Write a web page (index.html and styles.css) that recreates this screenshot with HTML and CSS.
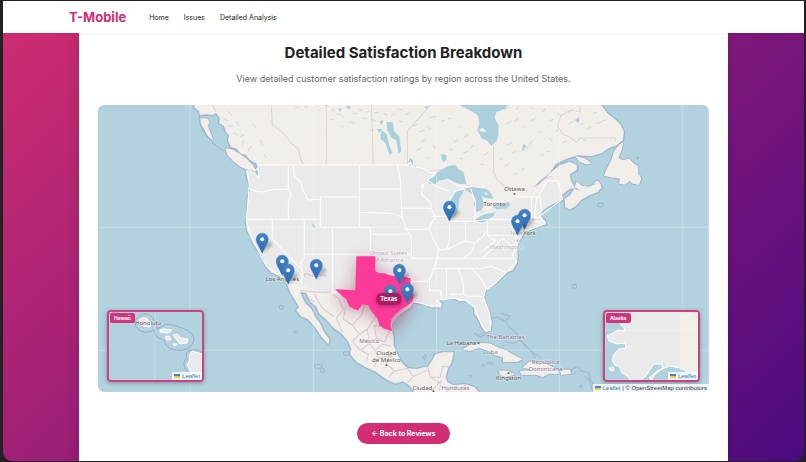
FILE: index.html
```html
<!DOCTYPE html>
<html lang="en">
  <head>
    <meta charset="UTF-8">
    <meta name="viewport" content="width=device-width, initial-scale=1.0">
    <title>T-Mobile - Detailed Analysis</title>
    <link rel="stylesheet" href="styles.css">
  </head>
  <body>
    <div class="page">
      <header class="navbar">
        <a class="logo" href="#">T-Mobile</a>
        <nav class="nav-links">
          <a href="#">Home</a>
          <a href="#">Issues</a>
          <a href="#">Detailed Analysis</a>
        </nav>
      </header>
      <main class="container">
        <h1>Detailed Satisfaction Breakdown</h1>
        <p class="subtitle">View detailed customer satisfaction ratings by region across the United States.</p>

        <div class="map">
          <svg class="map-canvas" viewBox="98 105 610 287" preserveAspectRatio="xMidYMid slice" role="img" aria-label="Map of the United States">
            <defs>
              <linearGradient id="pin-fill" x1="0" y1="0" x2="0" y2="1">
                <stop offset="0" stop-color="#4286c8"/>
                <stop offset="1" stop-color="#2f69ae"/>
              </linearGradient>
              <filter id="soft" x="-50%" y="-50%" width="200%" height="200%"><feGaussianBlur stdDeviation="1.5"/></filter>
              <filter id="glow" x="-50%" y="-50%" width="200%" height="200%"><feGaussianBlur stdDeviation="8"/></filter>
              <path id="continent" d="M192 100L195 108L199 111L200 115L207 114L212 115L216 113L220 118L219 123L224 126L226 132L229 135L228 141L231 147L236 148L240 153L246 155L250 160L256 163L258 168L258 178L255 172L250 171L246 170L247 177L249 184L250 190L248 198L247 208L248 214L246 221L247 230L251 236L253 243L258 250L263 257L266 266L271 272L279 275L284 279L287 283L290 292L295 300L299 307L296 310L301 316L308 319L315 327L321 336L328 344L329 339L323 331L320 324L315 317L311 309L305 303L301 295L300 291L306 293L310 301L316 306L319 313L327 320L333 327L341 333L348 341L351 348L350 354L357 362L366 367L375 371L386 379L395 383L403 381L410 386L416 394L480 394L474 387L465 384L453 385L447 382L445 377L447 369L451 362L453 352L444 352L435 354L432 360L428 366L416 369L407 368L401 362L397 354L393 345L393 337L392 331L391 324L395 318L401 313L410 307L413 302L421 303L427 304L431 307L437 306L440 308L441 303L437 300L445 298L454 298L459 301L465 300L470 302L474 307L474 313L479 320L481 326L485 331L490 330L491 322L489 313L485 304L483 297L485 290L490 285L496 282L501 277L506 272L512 270L516 263L517 255L514 249L517 246L516 239L520 239L523 232L530 229L545 224L544 220L541 221L539 216L542 210L548 206L556 202L562 199L560 196L567 190L572 188L577 190L586 188L595 184L601 187L597 192L589 195L580 200L575 206L569 209L565 207L564 199L570 195L574 188L570 180L569 174L576 170L576 165L569 162L560 165L552 171L545 178L539 184L532 188L540 180L549 173L555 164L565 159L577 155L590 156L601 153L608 148L616 145L622 140L623 132L620 125L614 119L607 114L602 107L597 100Z"/>
              <path id="islands" d="M200 119L207 119L209 122L207 126L210 133L212 139L208 136L204 128L201 124ZM226 149L232 150L239 154L246 159L252 165L255 170L249 170L240 166L234 161L228 155ZM619 145L622 143L620 151L617 158L623 161L628 159L632 163L637 167L637 174L640 178L638 184L632 183L629 180L624 184L619 183L620 178L611 177L604 175L607 168L611 161L614 151ZM576 157L584 159L590 163L586 164L579 161ZM576 182L581 186L586 187L580 189L575 187ZM594 183L597 181L600 185L597 189ZM463 349L470 345L480 343L490 344L498 348L506 351L513 355L521 359L517 361L503 361L503 357L494 354L488 350L478 347L470 350ZM499 371L507 371L513 374L505 376L500 374ZM523 367L529 362L538 362L547 365L556 369L558 373L548 373L542 376L536 374L521 374L520 371L530 371L529 368ZM560 370L569 370L570 373L561 374ZM525 229L535 224L532 228Z"/>
              <g id="pin">
                <path d="M0 20L4 17L10 12Q9 7 5 9Z" fill="#222" opacity=".3" filter="url(#soft)"/>
                <path d="M-6 6A6 6 0 0 1 6 6C6 10 3 13 0 20C-3 13-6 10-6 6Z" fill="url(#pin-fill)" stroke="#3675b3" stroke-width=".5"/>
                <circle cy="6" r="2" fill="#fff"/>
              </g>
            </defs>

            <rect class="water" x="98" y="105" width="610" height="287"/>
            <g class="sea-border">
              <use href="#continent"/>
              <use href="#islands"/>
            </g>
            <g class="shallow">
              <use href="#continent"/>
              <use href="#islands"/>
            </g>
            <use class="land" href="#continent"/>
            <use class="land coast" href="#islands"/>

            <!-- United States -->
            <path class="usa" d="M257 165H407L410 163L412 167L420 168L428 172L435 173L426 182L434 184L447 179L451 184L464 186L470 187L473 201L474 211L473 221L480 220L492 214L494 208L506 207L514 197H531L540 192L547 181L552 178L557 182L560 193L562 199L548 206L541 211L540 217L545 222L530 229L523 232L520 239L516 239L517 255L516 263L512 270L506 272L496 282L485 290L483 297L489 313L491 322L490 330L485 331L479 320L474 313L474 307L465 300L454 298L437 300L441 307L431 307L421 303L413 302L401 313L391 324L392 331L383 328L376 315L370 306L363 304L358 310L349 307L335 289L331 292H318L301 284L287 283L279 275L271 272L263 257L253 243L247 230L246 221L248 198L250 190L246 170L258 176Z"/>

            <!-- lakes and bays -->
            <g class="lake">
              <path d="M456 104H508L504 109L496 112L494 118L498 125L498 135L496 141L491 146L487 141L481 138L477 130L479 123L477 115L469 110Z"/>
              <path d="M426 181L433 177L437 172L443 169L447 166L454 165L458 169L463 172L466 184L459 184L453 182L447 179L443 180L438 181L435 184L430 184Z"/>
              <path d="M449 220L450 209L450 199L453 193L459 190L464 189L462 194L459 198L458 207L455 216Z"/>
              <path d="M464 189L470 187L479 188L486 189L491 194L493 199L485 198L481 196L484 204L481 210L476 212L473 204L475 199L471 194Z"/>
              <path d="M473 221L478 217L484 214L495 212L493 216L486 220L480 223Z"/>
              <path d="M492 207L497 204L508 202L510 205L506 208L497 209Z"/>
              <path d="M386 122L392 122L394 131L399 137L401 151L398 154L396 140L391 138L387 130ZM381 130L386 134L389 145L392 153L389 155L385 143L380 139ZM376 129L382 129L379 133ZM379 121L383 120L381 125Z"/>
              <path d="M441 154L446 155L446 160L443 162L441 159ZM409 158L413 160L412 166L408 164ZM311 222L315 226L313 228ZM319 266L322 266L321 269ZM338 108L342 109L339 112ZM345 106L350 106L349 110ZM423 107L428 106L427 109ZM523 144L526 146L521 152ZM574 120L579 117L578 123Z"/>
            </g>
            <path class="speck" d="M304 107h4M318 110l3 1M324 105l4 2M331 111l3-2M336 114l4 1M341 116l3 2M353 113l4 1M357 109l5 2M362 118l4 1M366 112l4-1M371 119l4 2M374 113l4-1M350 122l4 1M341 126l2 1M330 120l3-1M383 113l4 2M391 116l3-3M398 109l4 1M399 121l3 1M405 115l4-2M379 125l3-3M370 130l3 1M413 126l4-2M419 132l5-2M426 126l4 3M430 118l5-2M440 122l4-2M447 118l3 1M458 128l3-2M464 137l4-3M454 142l3-2M421 142l4-2M416 151l4-3M432 145l3 3M449 149l3 1M463 153l5-2M470 148l3-3M459 158l3 1M426 157l3 2M484 155l4-3M480 164l3 1M506 124l5-3M514 121l4-3M522 126l3 2M530 121l5-3M507 145l5-3M512 153l3-2M524 151l4-5M529 145l3-5M540 156l3-2M548 138l4 3M546 151l4 1M555 132l3-3M562 143l4-2M538 131l3 2M549 121l4-2M557 113l4 3M541 112l4-3M568 112l4-2M568 124l5-3M579 125l4-2M587 129l3-2M596 124l5-2M601 121l5-1M592 114l4-2M582 139l4 2M505 166l4-3M513 175l4-2M521 170l3-2M499 158l3 2M504 110l5-4M515 109l4-2M529 107l4 2M228 111l4 5M223 118l5 3M236 121l3 5M233 133l5 2M240 137l4-3M242 145l2-5M248 151l3-5M228 126l5 0M253 124l3 4M260 140l2 5M264 154l2 4M294 108l5-1"/>
            <path class="land" d="M479 129l3-1 4 3-2 1-5-1ZM484 192l4 2-3 1Z"/>

            <!-- province and country borders -->
            <path class="province" d="M271 104L272 124L278 129L284 134L291 143L298 149L301 160L303 164M326 104V164M371 104L373 164M431 104L407 131V164M493 146V171L497 180L504 186L514 189M560 116L557 126L562 134L569 137L576 142L580 138H615V141M560 116L570 110L580 112L578 104M541 180L552 176M212 104L216 112M413 166L426 172L444 169L463 183L471 188L478 207L482 213M455 165L465 183"/>
            <path class="mex-border" d="M300 290L318 292H331M313 292L322 308L333 316M333 294L339 299L343 309L336 318L342 332M345 307L343 319L352 325L361 315L364 305M352 325L359 334L367 329L376 315M359 334L352 341L360 350L369 343L367 329M369 343L376 338L384 342L389 331M376 338L374 325L381 326M360 350L368 354L366 362M369 343L375 350L382 344L391 346M375 350L378 358L390 355L396 361M378 358L374 366M390 355L386 363L394 371L388 377M394 371L407 368M407 368L413 376L407 383M413 376L427 370M427 366L430 377L439 382L431 391M430 377H440L442 366L450 367M441 380L439 390M456 385L445 392M465 384L460 392M305 292L309 299L315 302M312 308L316 311"/>

            <!-- state borders -->
            <path class="state" d="M257 165H407L410 162L412 167L420 168L428 172L435 173M248 188L255 191L262 192L271 190L289 189M288 165V189L291 194L288 203V219M247 219H320M293 165L294 177L300 181L303 191L308 200L320 199M320 227V197H359M359 165V227M320 227H370M304 219V258L300 263L302 272L301 284M272 219V239L300 268M332 227V292M304 254H410M359 189H400M359 212L388 213L397 215L403 218M370 227V254M370 234H407M397 165L400 179L401 208L402 218L407 231L411 237V257M400 208H431M404 229H427M420 187L423 184L428 181M423 185L421 194L430 202L431 209L435 217L428 228L433 239L438 249L437 257L433 269L429 280V290H440L441 298M431 216H449M449 221H474M449 221V241L446 249M465 221V241M438 250L446 249L454 246L460 243L465 241L474 243L482 237L487 229M487 219V235H514M488 219H512L516 225L513 231L516 236M437 258H514M410 258H436M375 256V271L411 278V300M434 268H482L491 266L505 272M446 268V298M458 268L463 285V294M449 294H464L466 296H482M471 268L480 278L486 288M411 281H430M474 244L471 252L463 258M482 257L493 248L502 238M478 253L489 246L495 240L487 236M502 238L511 246L516 249M531 197V221L543 222M536 197L534 217M547 181L539 194L541 211M530 217H541M514 197H540M474 221L487 219M427 172L435 173L427 180L434 185L440 188L449 191M447 179L458 186L470 187M331 292H335"/>
            <path class="state-coast" d="M247 171L249 184L248 198L246 221L251 236L258 250L266 266L279 275L287 283M254 171L258 168V178M516 236L513 247M519 239L512 255L516 262L506 272L496 282L485 290L483 297L489 313L490 330L485 331L479 320L474 307L465 300L454 298L437 300L441 305L431 306L413 301M449 220L450 199L455 191L464 189M470 188L475 202L474 221L481 223M523 232L545 223L539 216L562 199L557 181L547 181"/>

            <path class="sea-line" d="M199 116L202 130L214 144L225 152M478 335L483 332M502 318L508 326L517 334L524 345L534 353L540 357M490 318L497 317L504 321L510 316L500 313M488 332L480 337L474 333M504 341L512 343L520 340L530 350L535 358M570 370L577 366L581 371L588 372L590 379L594 388M573 374L575 371M584 376L589 380L592 391M423 357l2-3 1 3-2 2Z"/>
            <g class="islet">
              <circle cx="574" cy="286" r="2"/><ellipse cx="600" cy="205" rx="3" ry="2"/><circle cx="281" cy="307" r="2"/><circle cx="295" cy="332" r="1"/><ellipse cx="346" cy="353" rx="3" ry="2"/><ellipse cx="318" cy="366" rx="4" ry="2"/><circle cx="322" cy="370" r="2"/><ellipse cx="483" cy="365" rx="2" ry="1"/><ellipse cx="490" cy="363" rx="3" ry="1"/><circle cx="470" cy="376" r="1"/><circle cx="637" cy="158" r="1"/><circle cx="580" cy="386" r="1"/>
            </g>
            <path class="tile-seam" d="M190 105V392M313 105V392M436 105V392M559 105V392M682 105V392M98 227H708M98 350H708"/>

            <g class="place">
              <text x="514" y="191">Ottawa</text>
              <text x="494" y="206">Toronto</text>
              <text x="529" y="235">York</text>
              <text x="282" y="281">Los Angeles</text>
              <text x="386" y="355">Ciudad</text>
              <text x="386" y="362">de México</text>
              <text x="461" y="345">La Habana</text>
              <text x="508" y="380">Kingston</text>
              <text x="422" y="390">Ciudad</text>
            </g>
            <g class="country">
              <text x="369" y="343">México</text>
              <text x="505" y="339">The Bahamas</text>
              <text x="490" y="354">Cuba</text>
              <text x="545" y="364">República</text>
              <text x="545" y="371">Dominicana</text>
              <text x="455" y="390">Honduras</text>
            </g>
            <g class="faded">
              <text x="388" y="255">United States</text>
              <text x="388" y="262">of America</text>
              <text x="506" y="249">Washington</text>
              <text x="315" y="277">Phoenix</text>
              <text x="516" y="235">New</text>
            </g>
            <g class="dot"><circle cx="514" cy="194" r="1"/><circle cx="386" cy="365" r="1"/><circle cx="478" cy="343" r="1"/><circle cx="508" cy="373" r="1"/><circle cx="433" cy="391" r="1"/></g>

            <!-- highlighted state -->
            <path class="texas-glow" filter="url(#glow)" d="M356 260H375V275L411 282L413 301L391 335L376 319L363 308L349 311L335 293H355Z"/>
            <path class="texas" d="M356 256H375V271L379 273L385 273L389 275L395 276L401 275L406 277L410 278V289L413 294L412 301L410 303L406 306L401 309L395 314L391 319L390 325L392 331L383 328L379 325L377 318L371 311L368 305L362 304L358 310L354 309L349 306L346 299L341 295L335 289L355 290Z"/>

            <use href="#pin" x="262" y="233"/>
            <use href="#pin" x="282" y="255"/>
            <use href="#pin" x="288" y="264"/>
            <use href="#pin" x="316" y="259"/>
            <use href="#pin" x="399" y="264"/>
            <use href="#pin" x="390" y="285"/>
            <use href="#pin" x="407" y="283"/>
            <use href="#pin" x="449" y="201"/>
            <use href="#pin" x="524" y="209"/>
            <use href="#pin" x="517" y="215"/>
          </svg>
          <span class="state-label">Texas</span>

          <div class="inset inset-hawaii">
            <svg class="map-canvas" viewBox="109 313 93 68" preserveAspectRatio="xMidYMid slice" role="img" aria-label="Map of Hawaii">
              <rect class="water" x="109" y="313" width="93" height="68"/>
              <path class="hawaii-sea" d="M109 315L116 313L120 315M136 320Q144 311 152 318Q158 326 157 330L166 325Q177 326 187 331Q196 336 193 344Q188 353 175 351Q165 349 164 341Q155 339 154 331Q145 336 138 330Q133 325 136 320Z"/>
              <path class="hawaii-sea" d="M202 354Q197 348 187 353Q187 359 184 363Q183 368 189 375L188 383"/>
              <path class="hawaii-land" d="M137 323L142 319L146 319L151 324L150 328L144 327L138 325ZM160 331L164 330L172 331L168 334L160 333ZM165 338L169 337L171 341L167 341ZM173 336L177 335L181 339L188 340L187 344L180 345L177 341ZM173 345L177 345L175 347ZM202 355L192 352L189 357L190 361L187 366L191 373L190 382H203Z"/>
              <path class="tile-seam" d="M155 313V381"/>
              <text class="place" x="148" y="326">Honolulu</text>
            </svg>
            <span class="inset-label">Hawaii</span>
            <span class="attribution"><svg class="flag" viewBox="0 0 12 8"><path fill="#4c7be1" d="M0 0h12v4H0z"/><path fill="#ffd500" d="M0 4h12v3H0z"/><path fill="#e0bc00" d="M0 7h12v1H0z"/></svg> <a href="#">Leaflet</a></span>
          </div>

          <div class="inset inset-alaska">
            <svg class="map-canvas" viewBox="605 313 93 68" preserveAspectRatio="xMidYMid slice" role="img" aria-label="Map of Alaska">
              <rect class="water" x="605" y="313" width="93" height="68"/>
              <path class="hawaii-land" d="M617 311L620 318L619 323L624 329L625 332L618 331L613 334L607 337L609 342L617 345L625 344L626 349L619 350L614 355L612 361L615 366L619 367L622 374L627 377L632 383H638L646 377L649 372L654 365L662 365L663 369L657 372L654 376L662 370L670 367L680 369L688 373L694 374L700 380V311ZM609 369L613 368L614 371L611 372ZM649 379L655 374L652 381Z"/>
              <path class="land" d="M681 311H700V378L693 374L688 373L681 369Z"/>
              <path class="tile-seam" d="M681 313V381M605 331H698"/>
              <path class="speck" d="M691 313h5M664 367v-3"/>
            </svg>
            <span class="inset-label">Alaska</span>
            <span class="attribution"><svg class="flag" viewBox="0 0 12 8"><path fill="#4c7be1" d="M0 0h12v4H0z"/><path fill="#ffd500" d="M0 4h12v3H0z"/><path fill="#e0bc00" d="M0 7h12v1H0z"/></svg> <a href="#">Leaflet</a></span>
          </div>

          <span class="attribution"><svg class="flag" viewBox="0 0 12 8"><path fill="#4c7be1" d="M0 0h12v4H0z"/><path fill="#ffd500" d="M0 4h12v3H0z"/><path fill="#e0bc00" d="M0 7h12v1H0z"/></svg> <a href="#">Leaflet</a> | © OpenStreetMap contributors</span>
        </div>

        <a class="back-button" href="#">← Back to Reviews</a>
      </main>
    </div>
  </body>
</html>
```
FILE: styles.css
```css
* {
    box-sizing: border-box;
}
body {
    margin: 0;
    padding: 1px 2px 1px 3px;
    background-color: #232124;
    font-family: Inter, Arial, sans-serif;
    color: #222;
}
a {
    color: inherit;
    text-decoration: none;
}
.page {
    display: flex;
    flex-direction: column;
    min-height: calc(100vh - 2px);
    border-radius: 0 0 9px 9px;
    overflow: hidden;
    background: linear-gradient(135deg, #d12d70 0%, #4b0a80 100%);
}
.navbar {
    display: flex;
    align-items: center;
    gap: 23px;
    height: 32px;
    padding: 0 66px;
    background-color: #fff;
    box-shadow: 0 1px 2px rgba(0, 0, 0, 0.05);
    position: relative;
}
.logo {
    font-size: 13px;
    font-weight: 700;
    color: #d32d73;
}
.nav-links {
    display: flex;
    gap: 15px;
    font-size: 7px;
    font-weight: 400;
}
.container {
    flex: 1;
    display: flex;
    flex-direction: column;
    align-items: center;
    width: 81%;
    margin: 0 auto;
    padding: 10px 19px 15px;
    background-color: #fff;
    box-shadow: 0 0 10px rgba(0, 0, 0, 0.12);
}
h1 {
    margin: 0;
    font-size: 15px;
    line-height: 20px;
    font-weight: 700;
}
.subtitle {
    margin: 10px 0 21px;
    font-size: 9px;
    line-height: 11px;
    color: #666;
}
.map {
    position: relative;
    width: 100%;
    aspect-ratio: 610 / 287;
    border-radius: 6px;
    overflow: hidden;
}
.map-canvas {
    display: block;
    width: 100%;
    height: 100%;
}
.water {
    fill: #b1d2de;
}
.sea-border {
    fill: none;
    stroke: #a3b2cb;
    stroke-width: 3;
    stroke-linejoin: round;
}
.shallow {
    fill: none;
    stroke: #b1d2de;
    stroke-width: 1;
}
.land {
    fill: #f2efea;
}
.coast {
    stroke: #f2efea;
    stroke-width: 1;
}
.usa {
    fill: #ebeaea;
}
.lake {
    fill: #abd0dd;
}
.speck {
    fill: none;
    stroke: #abd0dd;
    stroke-width: 1;
    opacity: 0.6;
}
.province {
    fill: none;
    stroke: #cfc3c9;
    stroke-width: 1;
    opacity: 0.6;
}
.mex-border {
    fill: none;
    stroke: #cdb9ca;
    stroke-width: 1;
    opacity: 0.7;
}
.state, .state-coast {
    fill: none;
    stroke: #fff;
    stroke-width: 1;
    stroke-linejoin: round;
}
.sea-line, .islet {
    fill: none;
    stroke: #9ba9c4;
    stroke-width: 1;
    opacity: 0.7;
}
.tile-seam {
    fill: none;
    stroke: #fff;
    stroke-width: 1;
    opacity: 0.3;
}
.place, .country, .faded {
    font-family: "Noto Sans", sans-serif;
    font-size: 6px;
    text-anchor: middle;
    fill: #505050;
    stroke: rgba(255, 255, 255, 0.5);
    stroke-width: 1;
    paint-order: stroke;
}
.country {
    fill: #8d7097;
}
.faded {
    fill: #b9b3b9;
}
.dot {
    fill: #666;
}
.texas-glow {
    fill: #8a1a4e;
    opacity: 0.45;
}
.texas {
    fill: #fc3a98;
}
.state-label {
    position: absolute;
    left: 47.6%;
    top: 67.6%;
    transform: translate(-50%, -50%);
    padding: 2px 4px;
    border-radius: 5px;
    background-color: rgba(168, 24, 92, 0.9);
    box-shadow: 0 1px 4px rgba(60, 0, 30, 0.4);
    color: #fff;
    font-size: 6px;
    line-height: 8px;
    font-weight: 700;
}
.inset {
    position: absolute;
    bottom: 10px;
    width: 97px;
    height: 72px;
    border: 2px solid #cf3f83;
    border-radius: 4px;
    overflow: hidden;
    box-shadow: 0 1px 4px rgba(0, 0, 0, 0.3);
}
.inset-hawaii {
    left: 9px;
}
.inset-alaska {
    right: 9px;
}
.hawaii-sea {
    fill: none;
    stroke: #9ba9c4;
    stroke-width: 1;
}
.hawaii-land {
    fill: #ebeaea;
    stroke: #fff;
    stroke-width: 1;
    stroke-linejoin: round;
}
.inset-label {
    position: absolute;
    top: 1px;
    left: 1px;
    padding: 1px 4px;
    border-radius: 2px;
    background-color: #d0367a;
    color: #fff;
    font-size: 5px;
    line-height: 8px;
    font-weight: 700;
}
.attribution {
    position: absolute;
    right: 0;
    bottom: 0;
    padding: 0 2px;
    background-color: rgba(255, 255, 255, 0.8);
    color: #333;
    font-family: "Liberation Sans", Arial, sans-serif;
    font-size: 6px;
    line-height: 8px;
    white-space: nowrap;
}
.attribution a {
    color: #2a7fb0;
}
.flag {
    width: 6px;
    height: 4px;
}
.back-button {
    margin-top: 31px;
    padding: 0 15px;
    border-radius: 11px;
    background-color: #d32d73;
    color: #fff;
    font-size: 7px;
    line-height: 21px;
    font-weight: 700;
}
```
